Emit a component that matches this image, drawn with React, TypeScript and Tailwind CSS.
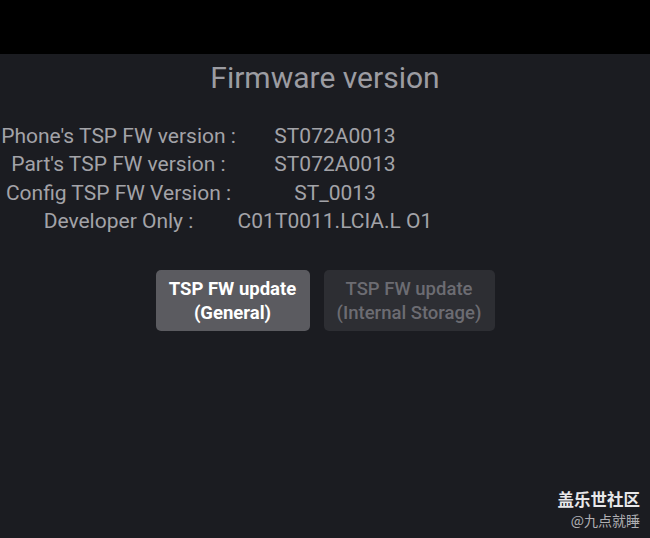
export default function App() {
  const rows: [string, string][] = [
    ["Phone's TSP FW version :", "ST072A0013"],
    ["Part's TSP FW version :", "ST072A0013"],
    ["Config TSP FW Version :", "ST_0013"],
    ["Developer Only :", "C01T0011.LCIA.L O1"],
  ];
  return (
    <div
      className="w-[650px] h-[538px] bg-[#1b1c21] flex flex-col overflow-hidden"
      style={{ fontFamily: "Roboto, 'Noto Sans CJK SC', sans-serif" }}
    >
      <div className="h-[54px] bg-black shrink-0" />
      <div className="flex justify-center pt-[6px] h-[46px]">
        <div className="text-[30px] leading-[36px] text-[#9c9ca2]">Firmware version</div>
      </div>
      <div className="flex flex-col mt-[22px]">
        {rows.map(([l, v]) => (
          <div key={l} className="flex h-[28.5px] items-center text-[21px] text-[#a3a3a8]">
            <div className="w-[237px] text-center whitespace-nowrap">{l}</div>
            <div className="w-[196px] text-center whitespace-nowrap">{v}</div>
          </div>
        ))}
      </div>
      <div className="flex justify-center gap-[14px] mt-[34px]">
        <div className="w-[154px] h-[61px] rounded-[5px] bg-[#5b5b60] flex flex-col items-center justify-center text-[18.5px] leading-[24px] font-bold text-white">
          <span>TSP FW update</span>
          <span>(General)</span>
        </div>
        <div className="w-[171px] h-[61px] rounded-[5px] bg-[#2d2e33] flex flex-col items-center justify-center text-[18.5px] leading-[24px] font-medium text-[#6c6c72]">
          <span>TSP FW update</span>
          <span>(Internal Storage)</span>
        </div>
      </div>
      <div className="flex-1" />
      <div className="flex flex-col items-end pr-[10px] pb-[8px]">
        <div className="text-[16.5px] leading-[22px] font-bold text-[#e8e8ea]" style={{ fontFamily: "'Noto Sans CJK SC', sans-serif" }}>盖乐世社区</div>
        <div className="text-[14px] leading-[20px] text-[#b0b0b4]" style={{ fontFamily: "'Noto Sans CJK SC', sans-serif" }}>@九点就睡</div>
      </div>
    </div>
  );
}
